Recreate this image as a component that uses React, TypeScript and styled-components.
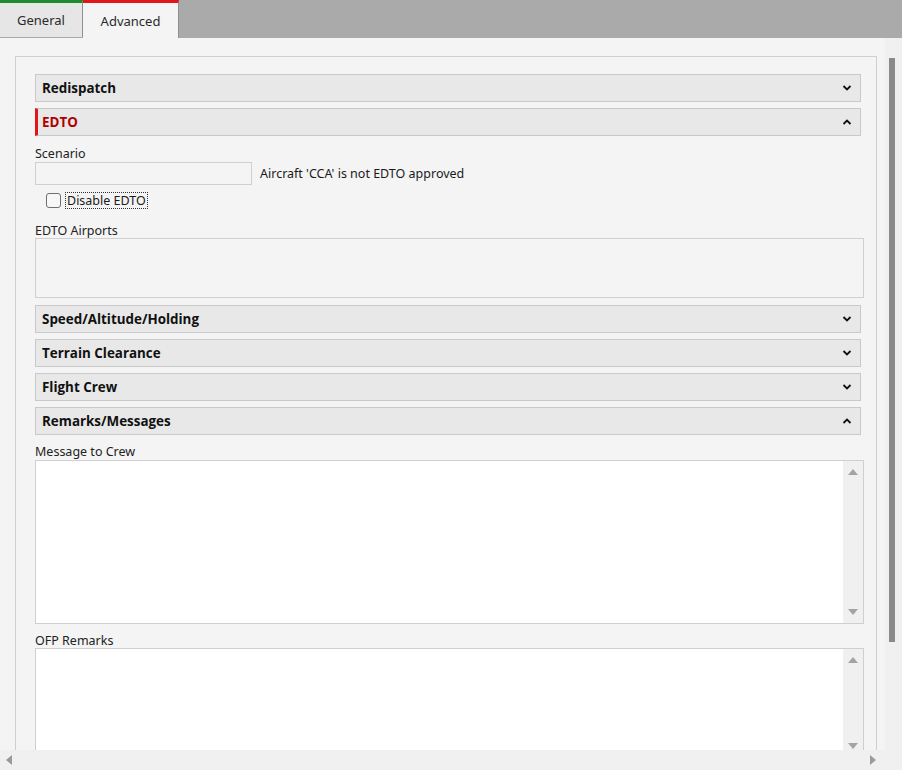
import React, { useState } from 'react';
import styled, { createGlobalStyle } from 'styled-components';

const GlobalStyle = createGlobalStyle`
  html, body {
    margin: 0;
    padding: 0;
    background: #f4f4f4;
    font-family: "Noto Sans", "Open Sans", sans-serif;
    font-size: 12.5px;
    color: #1a1a1a;
    overflow: hidden;
  }
`;

// --- 창 전체 레이아웃 ---
const Window = styled.div`
  width: 902px;
  height: 770px;
  display: flex;
  flex-direction: column;
  background: #f4f4f4;
`;

const TabBar = styled.div`
  display: flex;
  height: 38px;
  background: #aaaaaa;
  flex-shrink: 0;
`;

const Tab = styled.div<{ $active: boolean; $accent: string; $width: number }>`
  width: ${(p) => p.$width}px;
  box-sizing: border-box;
  border-top: 3px solid ${(p) => p.$accent};
  border-right: 1px solid #8f8f8f;
  background: ${(p) => (p.$active ? '#f4f4f4' : '#e6e6e6')};
  display: flex;
  align-items: center;
  justify-content: center;
  font-size: 13px;
  color: #2a2a2a;
  height: ${(p) => (p.$active ? '38px' : '37px')};
  cursor: pointer;
`;

const Middle = styled.div`
  flex: 1;
  display: flex;
  min-height: 0;
`;

const ScrollArea = styled.div`
  flex: 1;
  padding: 18px 8px 0 15px;
  overflow: hidden;
`;

const Frame = styled.div`
  border: 1px solid #cfcfcf;
  border-bottom: none;
  padding: 17px 15px 0 19px;
  display: flex;
  flex-direction: column;
  gap: 6px;
  height: 100%;
  box-sizing: border-box;

  & > * {
    flex-shrink: 0;
  }
`;

const VScroll = styled.div`
  width: 17px;
  background: #f0f0f0;
  position: relative;
  flex-shrink: 0;
`;

const VThumb = styled.div`
  position: absolute;
  left: 4px;
  top: 20px;
  width: 6px;
  height: 584px;
  background: #8a8a8a;
`;

const HScroll = styled.div`
  height: 20px;
  background: #f0f0f0;
  display: flex;
  align-items: center;
  justify-content: space-between;
  padding: 0 24px 0 4px;
  flex-shrink: 0;
`;

// --- 섹션(아코디언) 스타일 ---
const Section = styled.div`
  display: flex;
  flex-direction: column;
`;

const SectionHeader = styled.div<{ $accent: boolean }>`
  height: 28px;
  flex-shrink: 0;
  box-sizing: border-box;
  border: 1px solid #c9c9c9;
  border-left: ${(p) => (p.$accent ? '3px solid #e0161b' : '1px solid #c9c9c9')};
  background: #e8e8e8;
  display: flex;
  align-items: center;
  justify-content: space-between;
  padding: 0 8px 0 ${(p) => (p.$accent ? '4px' : '6px')};
  cursor: pointer;
`;

const SectionTitle = styled.span<{ $red: boolean }>`
  font-family: "Open Sans", "Noto Sans", sans-serif;
  font-weight: 700;
  font-size: 13.4px;
  color: ${(p) => (p.$red ? '#b00000' : '#111')};
`;

const SectionBody = styled.div`
  margin-right: -3px;
  padding-bottom: 1px;
  background: #f4f4f4;
  display: flex;
  flex-direction: column;
`;

const FieldLabel = styled.div<{ $top: number }>`
  margin-top: ${(p) => p.$top}px;
  line-height: 16px;
  height: 16px;
  color: #222;
`;

const ScenarioRow = styled.div`
  display: flex;
  align-items: center;
  gap: 8px;
`;

const ScenarioInput = styled.div`
  width: 217px;
  height: 23px;
  box-sizing: border-box;
  border: 1px solid #d0d0d0;
  background: #f4f4f4;
`;

const CheckRow = styled.label`
  display: flex;
  align-items: center;
  gap: 5px;
  margin: 6px 0 0 11px;
  height: 18px;
`;

const CheckBox = styled.span`
  width: 15px;
  height: 15px;
  border: 1px solid #6f6f6f;
  border-radius: 3px;
  background: #f7f7f7;
  box-sizing: border-box;
`;

const FocusText = styled.span`
  outline: 1px dotted #333;
  outline-offset: 0;
  line-height: 15px;
  padding: 0 1px;
`;

const ListBox = styled.div`
  height: 60px;
  box-sizing: border-box;
  border: 1px solid #d0d0d0;
  background: #f4f4f4;
  margin-top: -1px;
`;

const TextBox = styled.div<{ $height: number; $top: number }>`
  height: ${(p) => p.$height}px;
  box-sizing: border-box;
  border: 1px solid #cfcfcf;
  background: #ffffff;
  display: flex;
  justify-content: flex-end;
  margin-top: ${(p) => p.$top}px;
`;

const InnerScroll = styled.div`
  width: 20px;
  background: #f0f0f0;
  display: flex;
  flex-direction: column;
  justify-content: space-between;
  align-items: center;
  padding: 6px 0;
`;

const Arrow = ({ dir, color = '#a3a3a3' }: { dir: 'up' | 'down' | 'left' | 'right'; color?: string }) => {
  const pts = {
    up: '0,8 5,2 10,8',
    down: '0,2 5,8 10,2',
    left: '8,0 2,5 8,10',
    right: '2,0 8,5 2,10',
  }[dir];
  return (
    <svg width="10" height="10" viewBox="0 0 10 10">
      <polygon points={pts} fill={color} />
    </svg>
  );
};

const Chevron = ({ open }: { open: boolean }) => (
  <svg width="10" height="8" viewBox="0 0 10 8">
    <polyline
      points={open ? '1.5,6 5,2.5 8.5,6' : '1.5,2 5,5.5 8.5,2'}
      fill="none"
      stroke="#111"
      strokeWidth="1.8"
    />
  </svg>
);

const Header: React.FC<{ title: string; open?: boolean; accent?: boolean }> = ({ title, open = false, accent = false }) => (
  <SectionHeader $accent={accent}>
    <SectionTitle $red={accent}>{title}</SectionTitle>
    <Chevron open={open} />
  </SectionHeader>
);

const App: React.FC = () => {
  const [tab, setTab] = useState('Advanced');
  const [disableEdto, setDisableEdto] = useState(false);

  return (
    <Window>
      <GlobalStyle />
      <TabBar>
        <Tab $active={tab === 'General'} $accent="#1e8a2e" $width={83} onClick={() => setTab('General')}>
          General
        </Tab>
        <Tab $active={tab === 'Advanced'} $accent="#e0161b" $width={96} onClick={() => setTab('Advanced')}>
          Advanced
        </Tab>
      </TabBar>

      <Middle>
        <ScrollArea>
          <Frame>
            <Header title="Redispatch" />

            <Section>
              <Header title="EDTO" open accent />
              <SectionBody>
                <FieldLabel $top={10}>Scenario</FieldLabel>
                <ScenarioRow>
                  <ScenarioInput />
                  <span>Aircraft 'CCA' is not EDTO approved</span>
                </ScenarioRow>
                <CheckRow onClick={() => setDisableEdto(!disableEdto)}>
                  <CheckBox />
                  <FocusText>Disable EDTO</FocusText>
                </CheckRow>
                <FieldLabel $top={14}>EDTO Airports</FieldLabel>
                <ListBox />
              </SectionBody>
            </Section>

            <Header title="Speed/Altitude/Holding" />
            <Header title="Terrain Clearance" />
            <Header title="Flight Crew" />

            <Section>
              <Header title="Remarks/Messages" open />
              <SectionBody>
                <FieldLabel $top={9}>Message to Crew</FieldLabel>
                <TextBox $height={164} $top={0}>
                  <InnerScroll>
                    <Arrow dir="up" />
                    <Arrow dir="down" />
                  </InnerScroll>
                </TextBox>
                <FieldLabel $top={9}>OFP Remarks</FieldLabel>
                <TextBox $height={110} $top={-1}>
                  <InnerScroll>
                    <Arrow dir="up" />
                    <Arrow dir="down" />
                  </InnerScroll>
                </TextBox>
              </SectionBody>
            </Section>
          </Frame>
        </ScrollArea>
        <VScroll>
          <VThumb />
        </VScroll>
      </Middle>

      <HScroll>
        <Arrow dir="left" color="#9a9a9a" />
        <Arrow dir="right" color="#9a9a9a" />
      </HScroll>
    </Window>
  );
};

export default App;
